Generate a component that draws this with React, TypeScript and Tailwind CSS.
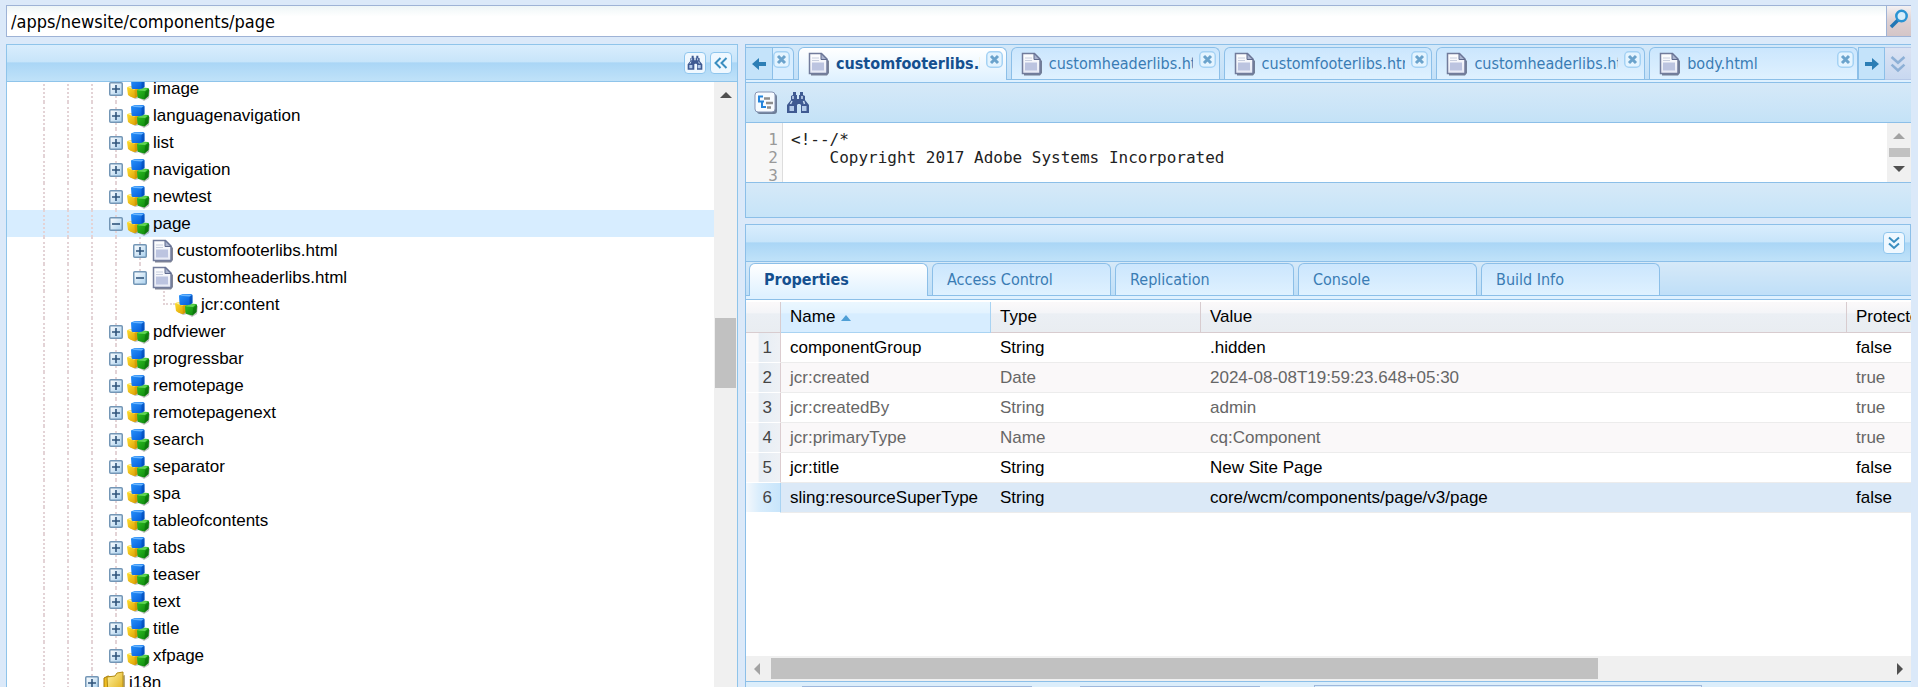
import type { ReactNode } from "react";

type NodeKind = "cubes" | "doc" | "folder";

const tree: { label: string; depth: number; kind?: NodeKind; state?: "plus" | "minus" | "leaf" }[] = [
  { label: "image", depth: 3 },
  { label: "languagenavigation", depth: 3 },
  { label: "list", depth: 3 },
  { label: "navigation", depth: 3 },
  { label: "newtest", depth: 3 },
  { label: "page", depth: 3, state: "minus" },
  { label: "customfooterlibs.html", depth: 4, kind: "doc" },
  { label: "customheaderlibs.html", depth: 4, kind: "doc", state: "minus" },
  { label: "jcr:content", depth: 5, state: "leaf" },
  { label: "pdfviewer", depth: 3 },
  { label: "progressbar", depth: 3 },
  { label: "remotepage", depth: 3 },
  { label: "remotepagenext", depth: 3 },
  { label: "search", depth: 3 },
  { label: "separator", depth: 3 },
  { label: "spa", depth: 3 },
  { label: "tableofcontents", depth: 3 },
  { label: "tabs", depth: 3 },
  { label: "teaser", depth: 3 },
  { label: "text", depth: 3 },
  { label: "title", depth: 3 },
  { label: "xfpage", depth: 3 },
  { label: "i18n", depth: 2, kind: "folder" },
];

const fileTabs = [
  "customfooterlibs.html",
  "customheaderlibs.html",
  "customfooterlibs.html",
  "customheaderlibs.html",
  "body.html",
];

const rows = [
  ["componentGroup", "String", ".hidden", "false"],
  ["jcr:created", "Date", "2024-08-08T19:59:23.648+05:30", "true"],
  ["jcr:createdBy", "String", "admin", "true"],
  ["jcr:primaryType", "Name", "cq:Component", "true"],
  ["jcr:title", "String", "New Site Page", "false"],
  ["sling:resourceSuperType", "String", "core/wcm/components/page/v3/page", "false"],
];

/* Icons */

function Defs() {
  return (
    <svg width="0" height="0" className="absolute" aria-hidden="true">
      <defs>
        <linearGradient id="blue" x1="0" y1="0" x2="1" y2="1">
          <stop offset="0" stopColor="#2a94fb" />
          <stop offset="1" stopColor="#0058d8" />
        </linearGradient>
        <linearGradient id="yellow" x1="0" y1="0" x2="1" y2="1">
          <stop offset="0" stopColor="#ffe030" />
          <stop offset="1" stopColor="#d99a00" />
        </linearGradient>
        <linearGradient id="green" x1="0" y1="0" x2="1" y2="1">
          <stop offset="0" stopColor="#2fc424" />
          <stop offset="1" stopColor="#0a800a" />
        </linearGradient>
        <linearGradient id="paper" x1="0" y1="0" x2="0" y2="1">
          <stop offset="0" stopColor="#ffffff" />
          <stop offset="1" stopColor="#e6e9f5" />
        </linearGradient>
        <linearGradient id="gold" x1="0" y1="0" x2="1" y2="1">
          <stop offset="0" stopColor="#fff3a0" />
          <stop offset="1" stopColor="#dfab10" />
        </linearGradient>
        <linearGradient id="box" x1="0" y1="0" x2="1" y2="1">
          <stop offset="0" stopColor="#ffffff" />
          <stop offset="1" stopColor="#a9d0ee" />
        </linearGradient>
      </defs>
    </svg>
  );
}

function Cubes() {
  return (
    <svg width="24" height="24" viewBox="0 0 24 24" className="shrink-0">
      <path d="M2 18l6 4 4-1 5 3 5-3 1-8-4-1-8 6z" fill="#000" opacity=".25" />
      <path d="M0 11q0-1.500 2-1.500l4-.5 5 2v8q-2 2.500-4 2-4-1-6-3z" fill="url(#yellow)" />
      <path d="M1 10.500l4-1 5 2-3 1z" fill="#fff09a" />
      <path d="M7.500 13l3.500-1v7l-3 2z" fill="#b87a00" opacity=".35" />
      <path d="M10 14q0-1 1-1.500l3-2 7 .5q1.500.5 1 2l-.5 6-4 3.500-6-1.500q-1-.5-1-1.500z" fill="url(#green)" />
      <path d="M11 13.500l3-2.500 7 .5-3 2.500z" fill="#62d455" />
      <path d="M18 15l4-3-.5 7-4 3z" fill="#045c08" opacity=".45" />
      <path d="M4 3q0-1 1-1l3-1h8q1.500 0 1.500 1.500V10q-2 2-4.500 2H6q-1.500 0-1.500-1.500z" fill="url(#blue)" />
      <path d="M5 2.700L8 1.500l9 .3-2.500 1.700z" fill="#6bb6ff" />
      <path d="M14.500 4l3-2V10l-3 1.800z" fill="#003c9e" opacity=".45" />
    </svg>
  );
}

function Doc() {
  return (
    <svg width="24" height="24" viewBox="0 0 24 24" className="shrink-0">
      <path d="M4 4h13l5 5v12l-2 2.500H4z" fill="#2e3552" opacity=".6" />
      <path d="M2.500 1.500h12l5.500 5.500v14.500h-17.500z" fill="url(#paper)" stroke="#727c9c" strokeWidth="1.500" />
      <path d="M14 1.500v6h6z" fill="#aab4cf" stroke="#5f6a8d" />
      <path d="M5 6h7M5 8.500h7" stroke="#c8cede" />
      <path d="M5 10.500h12v8H5z" fill="#bcc4e0" />
    </svg>
  );
}

function Folder() {
  return (
    <svg width="24" height="24" viewBox="0 0 24 24" className="shrink-0">
      <path d="M4 22l14 1 4-4V4l-3 1z" fill="#6b5200" opacity=".5" />
      <path d="M1 7l4-2 3 1v17l-4-1-3-4z" fill="#edbd23" stroke="#a77c08" />
      <path d="M4 6l8-1 2-3 6-1v18L16 22 5 23z" fill="url(#gold)" stroke="#b28a12" />
    </svg>
  );
}

function Expander({ open }: { open: boolean }) {
  return (
    <svg width="14" height="14" viewBox="0 0 14 14">
      <rect x=".75" y=".75" width="12.500" height="12.500" rx="1" fill="url(#box)" stroke="#7396b6" strokeWidth="1.500" />
      <path d={open ? "M3 7h8" : "M3 7h8M7 3v8"} stroke="#31557c" strokeWidth="1.600" />
    </svg>
  );
}

function Binoculars({ size }: { size: number }) {
  return (
    <svg width={size} height={size} viewBox="0 0 24 24" fill="#3f5a92">
      <path d="M7 1h3v3h1v4h2V4h1V1h3v3l2 1v4l4 5v8h-8v-8l-1-1h-2l-1 1v8H1v-8l4-5V5l2-1z" />
      <path d="M3.500 15h4.500v5H3.500zM16 15h4.500v5H16z" fill="#b3cbea" />
      <path d="M7 5v3M6 10l-1.500 3M16 5v3M17.500 10l1 3" stroke="#c9dcf2" strokeWidth="1.500" />
    </svg>
  );
}

function TreeIcon() {
  return (
    <svg width="24" height="24" viewBox="0 0 24 24">
      <rect x="3" y="3" width="20" height="20" rx="3" fill="#46536f" opacity=".7" />
      <rect x="1" y="1" width="20" height="20" rx="3" fill="#f7fbff" stroke="#8795b4" />
      <path d="M4 5.500h5M5 5v5.500h5M8 10v6h4" stroke="#2384dc" strokeWidth="2" fill="none" />
      <path d="M10 7.500h6M12 12h7M13 16.500h4" stroke="#8d8d8d" strokeWidth="2.500" />
    </svg>
  );
}

function CloseIcon() {
  return (
    <svg width="17" height="17" viewBox="0 0 17 17">
      <rect x=".75" y=".75" width="15.500" height="15.500" rx="4" fill="#e4f4ff" stroke="#a5d2f4" strokeWidth="1.500" />
      <path d="M5 5l7 7M12 5l-7 7" stroke="#6ba3cc" strokeWidth="3" />
    </svg>
  );
}

function Arrow({ left }: { left?: boolean }) {
  return (
    <svg width="14" height="14" viewBox="0 0 14 14" fill="#2c7eb5">
      <path d={left ? "M0 7l7-6v4h7v4H7v4z" : "M14 7L7 1v4H0v4h7v4z"} />
    </svg>
  );
}

function Chevrons({ dir, size = 14, color = "#3a8ec0" }: { dir: "left" | "down"; size?: number; color?: string }) {
  return (
    <svg width={size} height={size} viewBox="0 0 14 14" fill="none" stroke={color} strokeWidth="2">
      <path d={dir === "left" ? "M6.500 2l-5 5 5 5M12.500 2l-5 5 5 5" : "M2 1.500l5 4.500 5-4.500M2 7.500l5 4.500 5-4.500"} />
    </svg>
  );
}

function ToolButton({ label, children }: { label: string; children: ReactNode }) {
  return (
    <button
      aria-label={label}
      className="flex size-[22px] items-center justify-center rounded border border-[#8fc6ee] bg-[#eff8ff]"
    >
      {children}
    </button>
  );
}

/* Left side */

function TreeRow({ label, depth, kind = "cubes", state = "plus" }: (typeof tree)[number]) {
  const selected = label === "page";
  const dotted = "border-l-2 border-dotted border-[#e3d3d6]";

  return (
    <li className={`flex h-[27px] items-center pl-[25px] ${selected ? "bg-[#d7edff]" : ""}`}>
      {Array.from({ length: depth }, (_, i) => (
        <span key={i} className="flex h-full w-6 shrink-0 justify-center">
          {i < 4 && <span className={dotted} />}
        </span>
      ))}
      {state === "leaf" ? (
        <span className="h-full w-[23px] shrink-0 pl-[11px]">
          <span className="block h-[14px] border-b-2 border-l-2 border-dotted border-[#e3d3d6]" />
        </span>
      ) : (
        <span className="flex h-full w-[23px] shrink-0 flex-col items-center">
          <span className={`flex-1 ${dotted}`} />
          <Expander open={state === "minus"} />
          <span className={`flex-1 ${label === "customheaderlibs.html" ? "" : dotted}`} />
        </span>
      )}
      {kind === "cubes" && <Cubes />}
      {kind === "doc" && <Doc />}
      {kind === "folder" && <Folder />}
      <span className="pl-0.5">{label}</span>
    </li>
  );
}

function Sidebar() {
  return (
    <aside className="flex w-[732px] shrink-0 flex-col border border-b-0 border-[#8fc4ea] bg-white">
      <div className="flex h-[37px] shrink-0 items-center justify-end gap-1 border-b border-[#8fc4ea] bg-[linear-gradient(#d9edfd,#c8e5fa_46%,#aad6f6_50%,#c0e2f9)] pr-[5px]">
        <ToolButton label="Find">
          <Binoculars size={16} />
        </ToolButton>
        <ToolButton label="Collapse">
          <Chevrons dir="left" />
        </ToolButton>
      </div>
      <div className="flex min-h-0 flex-1">
        <div className="min-w-0 flex-1 overflow-hidden">
          <ul className="-mt-[7px] text-[17px] leading-[27px] text-black">
            {tree.map((node, i) => (
              <TreeRow key={i} {...node} />
            ))}
          </ul>
        </div>
        <div className="flex w-[23px] flex-col items-center bg-[#f0f0f0] pt-[10px]">
          <span className="border-x-[6px] border-b-[6px] border-x-transparent border-b-[#505050]" />
          <span className="mt-[220px] h-[70px] w-[21px] bg-[#c1c1c1]" />
        </div>
      </div>
    </aside>
  );
}

/* Right side */

function FileTab({ label, active }: { label: string; active?: boolean }) {
  return (
    <button
      className={`flex w-[209px] min-w-0 items-start rounded-t-md border border-b-0 border-[#8cbfe8] pl-2 ${
        active
          ? "-mb-px bg-[linear-gradient(#ffffff,#dff1ff)] font-bold text-[#15508f]"
          : "bg-[linear-gradient(#cbe6fd,#dff1ff)] text-[#3a7cb4]"
      }`}
    >
      <span className="pt-1">
        <Doc />
      </span>
      <span className="ml-[5px] flex-1 overflow-hidden text-left leading-8 whitespace-nowrap">{label}</span>
      <span className="mr-[3px] ml-1.5 pt-[3px]">
        <CloseIcon />
      </span>
    </button>
  );
}

function Editor() {
  return (
    <section className="border border-r-0 border-[#8cbfe8]">
      <div className="flex h-[35px] bg-[linear-gradient(#d3e8f9,#c3e0f8)] pt-0.5 text-[16px]">
        <button aria-label="Previous tabs" className="flex w-[27px] items-center justify-center border border-l-0 border-[#8cbfe8] bg-[#c4e3fa]">
          <Arrow left />
        </button>
        <span className="flex w-[21px] rounded-tr-md border border-l-0 border-[#8cbfe8] bg-[#d7edff] pt-[3px]">
          <CloseIcon />
        </span>
        <div className="flex min-w-0 flex-1 gap-1 border-b border-[#8cbfe8] pl-1 font-['DejaVu_Sans_Condensed','Noto_Sans',sans-serif]">
          {fileTabs.map((name, i) => (
            <FileTab key={i} label={name} active={i === 0} />
          ))}
        </div>
        <button aria-label="Next tabs" className="flex w-[27px] items-center justify-center border border-[#8cbfe8] bg-[#c4e3fa]">
          <Arrow />
        </button>
        <button aria-label="All tabs" className="flex w-[26px] items-center justify-center border-y border-[#b7c9e8] bg-[linear-gradient(#dbe3f3,#c8d8f0)]">
          <Chevrons dir="down" size={18} color="#8eb0d6" />
        </button>
      </div>
      <div className="h-[3px] border-b border-[#8cbfe8] bg-[#dff1ff]" />
      <div className="flex h-10 items-center gap-2 border-b border-[#8cbfe8] bg-[linear-gradient(#d6e9f8,#c4e2f7)] pl-2">
        <button aria-label="Outline">
          <TreeIcon />
        </button>
        <button aria-label="Search">
          <Binoculars size={24} />
        </button>
      </div>
      <div className="flex h-[59px] overflow-hidden bg-white font-['DejaVu_Sans_Mono',monospace] text-[16px] leading-[18px]">
        <div className="w-[37px] border-r border-[#dddddd] bg-[#f7f7f7] pt-2 pr-1 text-right text-[#999999]">
          <div>1</div>
          <div>2</div>
          <div>3</div>
        </div>
        <pre className="flex-1 pt-2 pl-2 font-['DejaVu_Sans_Mono',monospace] text-[#222222]">
          {"<!--/*\n    Copyright 2017 Adobe Systems Incorporated"}
        </pre>
        <div className="flex w-6 flex-col items-center bg-[#f0f0f0] pt-[10px]">
          <span className="border-x-[6px] border-b-[6px] border-x-transparent border-b-[#a3a3a3]" />
          <span className="mt-[9px] h-[9px] w-[21px] bg-[#c1c1c1]" />
          <span className="mt-[9px] border-x-[6px] border-t-[6px] border-x-transparent border-t-[#505050]" />
        </div>
      </div>
      <div className="h-[35px] border-t border-[#8cbfe8] bg-[linear-gradient(#d6e9f8,#c6e4f8)]" />
    </section>
  );
}

function Properties() {
  const cell = "overflow-hidden pl-[9px] text-left font-normal whitespace-nowrap";
  const head = "border-r border-b border-[#d8cccf] bg-[linear-gradient(#fbf9fa,#f4f5f8_35%,#ebeff4_40%,#e9edf1)]";

  return (
    <section className="mt-1.5 flex min-h-0 flex-1 flex-col border border-r-0 border-b-0 border-[#8cbfe8] bg-white">
      <div className="flex h-[37px] shrink-0 items-center justify-end border-r border-b border-[#8cbfe8] bg-[linear-gradient(#d9edfd,#c8e5fa_46%,#aad6f6_50%,#c0e2f9)] pr-[5px]">
        <ToolButton label="Collapse panel">
          <Chevrons dir="down" />
        </ToolButton>
      </div>
      <div className="flex h-[34px] shrink-0 gap-1 border-b border-[#8cbfe8] bg-[linear-gradient(#d6e9f8,#bfdff8)] pt-px pl-[3px] font-['DejaVu_Sans_Condensed','Noto_Sans',sans-serif] text-[16px]">
        {["Properties", "Access Control", "Replication", "Console", "Build Info"].map((tab, i) => (
          <button
            key={tab}
            className={`w-[179px] rounded-t-md border border-b-0 border-[#8cbfe8] pl-3.5 text-left ${
              i === 0
                ? "-mb-px bg-[linear-gradient(#ffffff,#dff1ff)] font-bold text-[#15508f]"
                : "bg-[linear-gradient(#cbe6fd,#dff1ff)] text-[#3a7cb4]"
            }`}
          >
            {tab}
          </button>
        ))}
      </div>
      <div className="h-1 shrink-0 border-b border-[#8cbfe8] bg-[#dff1ff]" />

      <div className="min-h-0 flex-1 overflow-hidden pt-0.5">
        <table className="w-full table-fixed border-separate border-spacing-0 text-[17px]">
          <colgroup>
            <col className="w-[35px]" />
            <col className="w-[210px]" />
            <col className="w-[210px]" />
            <col />
            <col className="w-16" />
          </colgroup>
          <thead>
            <tr className="h-[31px]">
              <th className={head} />
              <th className="border-r border-b border-[#a9d3f2] bg-[linear-gradient(#ebf7ff,#e3f3ff_35%,#d7edff_40%)] pl-[9px] text-left font-normal">
                Name
                <span className="ml-1.5 inline-block border-x-[5px] border-b-[6px] border-x-transparent border-b-[#4f9fd6] align-middle" />
              </th>
              <th className={`${head} ${cell}`}>Type</th>
              <th className={`${head} ${cell}`}>Value</th>
              <th className={`${head} ${cell} border-r-0`}>Protected</th>
            </tr>
          </thead>
          <tbody>
            {rows.map((row, i) => {
              const locked = row[3] === "true";
              const selected = i === 5;
              return (
                <tr
                  key={row[0]}
                  className={`h-[30px] ${selected ? "bg-[#dbe9f7]" : i % 2 ? "bg-[#faf8f9]" : "bg-white"} ${
                    locked ? "text-[#666666]" : "text-black"
                  }`}
                >
                  <td
                    className={`border-r border-b border-b-white pr-2 text-right text-[#444444] ${
                      selected
                        ? "border-r-[#a9d3f2] bg-[linear-gradient(90deg,#f4f8fc,#d9edfc_40%,#c8e5fb)]"
                        : "border-r-[#dccdd0] bg-[linear-gradient(90deg,#f9f8f9_35%,#e6edf4_40%,#eef1f5)]"
                    }`}
                  >
                    {i + 1}
                  </td>
                  {row.map((value, j) => (
                    <td key={j} className={`border-b border-[#ececec] ${cell}`}>
                      {value}
                    </td>
                  ))}
                </tr>
              );
            })}
          </tbody>
        </table>
      </div>

      <div className="flex h-[25px] shrink-0 items-center bg-[#f0f0f0] pr-2 pl-2">
        <span className="border-y-[6px] border-r-[6px] border-y-transparent border-r-[#a3a3a3]" />
        <span className="ml-[11px] h-[21px] w-[72%] bg-[#c1c1c1]" />
        <span className="ml-auto border-y-[6px] border-l-[6px] border-y-transparent border-l-[#505050]" />
      </div>
      <div className="flex h-1.5 shrink-0 items-end border-t border-[#8cbfe8] bg-[#dceefb] pl-14">
        <span className="h-px w-[230px] bg-[#9eb8dc]" />
        <span className="ml-12 h-px w-[180px] bg-[#9eb8dc]" />
        <span className="ml-[54px] h-0.5 w-[388px] border border-b-0 border-[#9eb8dc]" />
      </div>
    </section>
  );
}

export default function App() {
  return (
    <div className="flex h-screen flex-col overflow-hidden bg-[#dbe9f9] pt-[5px] pr-[7px] pl-1.5 font-['Liberation_Sans',Arial,sans-serif] text-black">
      <Defs />
      <div className="flex h-8 shrink-0 border border-r-0 border-[#9eb3d6] bg-white">
        <input
          aria-label="Path"
          defaultValue="/apps/newsite/components/page"
          className="min-w-0 flex-1 bg-[linear-gradient(#eef6f7,#ffffff_35%)] pl-1 font-['DejaVu_Sans_Condensed','Noto_Sans',sans-serif] text-[18px] outline-none"
        />
        <button
          aria-label="Go"
          className="flex w-[25px] items-start justify-center border-l border-[#9eb3d6] bg-[linear-gradient(#f3f1f3,#ddd0d2_50%,#d4c5c7)] pt-[3px]"
        >
          <svg width="20" height="20" viewBox="0 0 20 20" fill="none">
            <path d="M2 18l7-7" stroke="#2377b5" strokeWidth="3.500" />
            <circle cx="12.500" cy="7" r="5.200" fill="#d7eefb" stroke="#2a93d3" strokeWidth="2.500" />
          </svg>
        </button>
      </div>

      <div className="mt-[7px] flex min-h-0 flex-1 gap-[7px]">
        <Sidebar />
        <main className="flex min-w-0 flex-1 flex-col">
          <Editor />
          <Properties />
        </main>
      </div>
    </div>
  );
}
